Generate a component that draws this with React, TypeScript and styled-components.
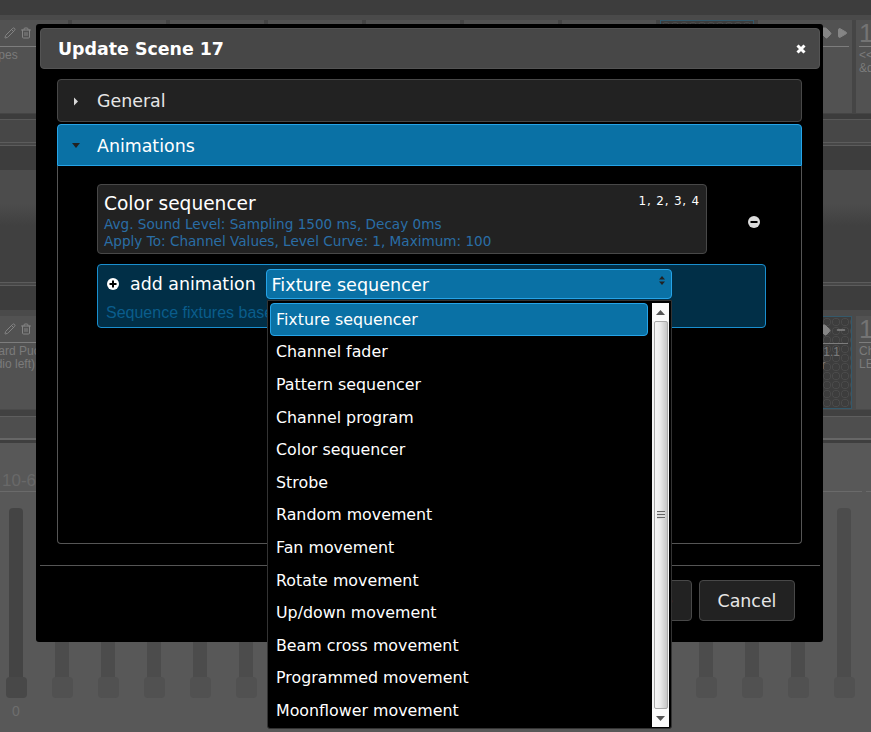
import React from "react";
import styled, { createGlobalStyle } from "styled-components";
import { Pencil, Trash2, Tag, Play, Minus } from "lucide-react";

const GlobalStyle = createGlobalStyle`
  html, body {
    margin: 0;
    padding: 0;
    height: 732px;
    overflow: hidden;
    background: #585858;
    font-family: "DejaVu Sans", sans-serif;
  }
  * { box-sizing: border-box; }
`;

const Page = styled.div`
  position: relative;
  width: 871px;
  height: 732px;
  overflow: hidden;
`;

/* ---------- dimmed page behind the dialog ---------- */

const Band = styled.div<{ $h: number; $bg: string; $line?: string }>`
  height: ${(p) => p.$h}px;
  background: ${(p) => p.$bg};
  border-top: ${(p) => (p.$line ? `1px solid ${p.$line}` : "none")};
`;

const SceneRow = styled.div<{ $bg: string }>`
  display: flex;
  gap: 4px;
  height: 94px;
  margin-left: -26px;
  width: 1000px;
  background: ${(p) => p.$bg};
`;

const SceneCard = styled.div<{ $active?: boolean }>`
  flex: 0 0 94px;
  height: 93px;
  padding: 0 3px;
  font-family: "Liberation Sans", sans-serif;
  font-size: 12px;
  line-height: 13px;
  color: #7b7b7b;
  white-space: nowrap;
  overflow: hidden;
  background-color: ${(p) => (p.$active ? "#3d3d3d" : "#525252")};
  background-image: ${(p) =>
    p.$active ? "radial-gradient(circle at 5px 5px, transparent 3px, #4b4b4b 3.5px, transparent 4.5px)" : "none"};
  background-size: 9px 9px;
  border: ${(p) => (p.$active ? "1px solid #34596b" : "none")};
`;

const CardTop = styled.div`
  display: flex;
  align-items: center;
  height: 27px;
  border-bottom: 1px solid #7d7d7d;
  margin-bottom: 2px;
`;

const CardNumber = styled.span`
  width: 30px;
  font-size: 26px;
  color: #747474;
`;

const CardTools = styled.div`
  display: flex;
  gap: 4px;
  margin-left: auto;
  margin-right: 1px;
  color: #858585;
  svg { display: block; flex: none; }
`;

const CardLine = styled.div`
  height: 13px;
`;

const BankHead = styled.div`
  display: flex;
  gap: 4px;
  height: 49px;
`;

const BankGroup = styled.div<{ $w?: number }>`
  flex: ${(p) => (p.$w ? `0 0 ${p.$w}px` : "1")};
  padding: 28px 0 0 2px;
  height: 49px;
  border-bottom: 1px solid #6a6a6a;
  font-family: "Liberation Sans", sans-serif;
  font-size: 17px;
  line-height: 20px;
  color: #696969;
`;

const FaderRow = styled.div`
  display: flex;
  margin: 16px 0 0 -7px;
`;

const Fader = styled.div`
  flex: 0 0 46px;
  display: flex;
  flex-direction: column;
  align-items: center;
  font-family: "Liberation Sans", sans-serif;
  font-size: 14px;
  line-height: 16px;
  color: #6e6e6e;
`;

const FaderTrack = styled.div<{ $dark?: boolean }>`
  width: 14px;
  height: 169px;
  border-radius: 4px 4px 0 0;
  background: ${(p) => (p.$dark ? "#444444" : "#4c4c4c")};
`;

const FaderKnob = styled.div<{ $dark?: boolean }>`
  width: 21px;
  height: 21px;
  margin-bottom: 5px;
  border-radius: 4px;
  background: ${(p) => (p.$dark ? "#484848" : "#515151")};
`;

/* ---------- dialog ---------- */

const Dialog = styled.div`
  position: absolute;
  left: 36px;
  top: 24px;
  width: 787px;
  height: 618px;
  padding: 4px 3px 0 4px;
  background: #000;
  border-radius: 3px;
`;

const DialogHeader = styled.div`
  display: flex;
  align-items: center;
  justify-content: space-between;
  height: 41px;
  padding: 0 13px 0 17px;
  background: #474747;
  border: 1px solid #545454;
  border-radius: 4px;
`;

const DialogTitle = styled.h1`
  margin: 0;
  font-size: 17.4px;
  line-height: 22px;
  font-weight: 700;
  color: #fff;
`;

const DialogBody = styled.div`
  display: flex;
  flex-direction: column;
  gap: 2px;
  padding: 10px 18px 0 17px;
  height: 497px;
  border-bottom: 1px solid #555;
`;

const AccordionHead = styled.div<{ $open?: boolean }>`
  display: flex;
  align-items: center;
  gap: 17px;
  height: ${(p) => (p.$open ? 42 : 43)}px;
  padding: 1px 0 0 14px;
  font-size: 17.4px;
  color: ${(p) => (p.$open ? "#fff" : "#e6e6e6")};
  background: ${(p) => (p.$open ? "#0a71a5" : "#222222")};
  border: 1px solid ${(p) => (p.$open ? "#26a4e8" : "#484848")};
  border-radius: ${(p) => (p.$open ? "4px 4px 0 0" : "4px")};
  svg { flex: none; }
`;

const AccordionPanel = styled.div`
  height: 378px;
  margin-top: -2px;
  padding: 18px 35px 0 39px;
  border: 1px solid #555;
  border-top: none;
  border-radius: 0 0 4px 4px;
`;

const AnimationLine = styled.div`
  display: flex;
  align-items: center;
`;

const AnimationCard = styled.div`
  position: relative;
  width: 610px;
  height: 70px;
  padding: 6px 6px 0;
  background: #222222;
  border: 1px solid #484848;
  border-radius: 4px;
`;

const AnimationName = styled.div`
  font-size: 18.6px;
  line-height: 25px;
  color: #fff;
`;

const AnimationDetail = styled.div`
  font-size: 13.6px;
  line-height: 17px;
  color: #2a6ea6;
  white-space: nowrap;
`;

const AnimationChannels = styled.span`
  position: absolute;
  top: 8px;
  right: 6px;
  font-size: 12px;
  line-height: 16px;
  letter-spacing: 0.8px;
  color: #fff;
`;

const RemoveButton = styled.span`
  margin: 6px 0 0 41px;
  color: #dcdcdc;
  svg { display: block; }
`;

const AddPanel = styled.div`
  width: 669px;
  height: 64px;
  margin-top: 10px;
  padding: 4px 0 0 8px;
  background: #012f47;
  border: 1px solid #1a8fcf;
  border-radius: 4px;
`;

const AddLine = styled.div`
  display: flex;
  align-items: center;
  height: 30px;
`;

const AddIcon = styled.span`
  display: flex;
  margin-left: 1px;
  color: #fff;
`;

const AddLabel = styled.span`
  margin-left: 11px;
  width: 136px;
  font-size: 17.4px;
  color: #fff;
  white-space: nowrap;
`;

const SelectBox = styled.div`
  position: relative;
  width: 406px;
  height: 30px;
  padding: 1px 0 0 4.5px;
  font-size: 17.6px;
  line-height: 28px;
  color: #fff;
  background: #0a71a5;
  border: 1px solid #26a4e8;
  border-radius: 4px;
`;

const SortArrows = styled.svg`
  position: absolute;
  right: 6px;
  top: 6px;
`;

const AddHint = styled.div`
  margin-top: 5px;
  font-family: "Liberation Sans", sans-serif;
  font-size: 16px;
  line-height: 18px;
  color: #0a5d8c;
  white-space: nowrap;
`;

/* native select style list, lies over the dialog */
const OptionList = styled.div`
  position: absolute;
  left: 0;
  top: 30px;
  z-index: 2;
  display: flex;
  width: 405px;
  height: 429px;
  padding: 2px;
  background: #000;
  border: 1px solid #333;
  border-radius: 0 0 3px 3px;
`;

const Options = styled.div`
  flex: 1;
  padding-right: 4px;
`;

const OptionItem = styled.div<{ $selected?: boolean }>`
  display: flex;
  align-items: center;
  height: 32.6px;
  padding-left: 5px;
  font-size: 15.85px;
  line-height: 29px;
  color: #fff;
  background: ${(p) => (p.$selected ? "#0a71a5" : "transparent")};
  border: 1px solid ${(p) => (p.$selected ? "#26a4e8" : "transparent")};
  border-radius: 4px;
`;

const ScrollBar = styled.div`
  display: flex;
  flex-direction: column;
  flex: 0 0 17px;
  height: 424px;
  background: #f4f4f4;
`;

const ScrollButton = styled.div`
  display: flex;
  align-items: center;
  justify-content: center;
  flex: 0 0 18px;
  background: #fbfbfb;
`;

const ScrollThumb = styled.div`
  flex: 1;
  display: flex;
  align-items: center;
  justify-content: center;
  margin: 0 1px 0 2px;
  border: 1px solid #a8a8a8;
  border-radius: 2px;
  background: linear-gradient(90deg, #f6f6f6 0%, #ececec 40%, #c6c6c6 100%);
`;

const ThumbGrip = styled.div`
  width: 8px;
  height: 8px;
  background: repeating-linear-gradient(180deg, #666 0 1px, #ddd 1px 3px);
`;

const DialogFooter = styled.div`
  display: flex;
  justify-content: flex-end;
  gap: 7px;
  padding: 14px 25px 0 0;
`;

const FooterButton = styled.button<{ $w: number }>`
  height: 41px;
  width: ${(p) => p.$w}px;
  padding: 0;
  font-family: inherit;
  font-size: 17.4px;
  color: #e6e6e6;
  background: #222222;
  border: 1px solid #484848;
  border-radius: 4px;
`;

const TriRight = () => (
  <svg width="8" height="9" viewBox="0 0 8 9">
    <polygon points="2,0.5 6,4.5 2,8.5" fill="#d8d8d8" />
  </svg>
);

const TriDown = () => (
  <svg width="8" height="5" viewBox="0 0 8 5">
    <polygon points="0,0 8,0 4,5" fill="#222" />
  </svg>
);

const CloseIcon = () => (
  <svg width="10" height="10" viewBox="0 0 10 10">
    <path d="M1.5 1.5 L8.5 8.5 M8.5 1.5 L1.5 8.5" stroke="#fff" strokeWidth="3" />
  </svg>
);

const CircleIcon = ({ plus }: { plus?: boolean }) => (
  <svg width="12" height="12" viewBox="0 0 12 12">
    <circle cx="6" cy="6" r="6" fill="currentColor" />
    <rect x="2.5" y="5" width="7" height="2" fill="#000" />
    {plus && <rect x="5" y="2.5" width="2" height="7" fill="#000" />}
  </svg>
);

const ScrollArrow = ({ down }: { down?: boolean }) => (
  <svg width="9" height="5" viewBox="0 0 9 5">
    <polygon points={down ? "0,0 9,0 4.5,5" : "0,5 9,5 4.5,0"} fill="#555" />
  </svg>
);

const animationTypes = [
  "Fixture sequencer",
  "Channel fader",
  "Pattern sequencer",
  "Channel program",
  "Color sequencer",
  "Strobe",
  "Random movement",
  "Fan movement",
  "Rotate movement",
  "Up/down movement",
  "Beam cross movement",
  "Programmed movement",
  "Moonflower movement",
];

interface Scene {
  lines: string[];
  active?: boolean;
  last?: boolean;
}

const topScenes: Scene[] = [
  { lines: ["Shapes"] },
  { lines: [] },
  { lines: [] },
  { lines: [] },
  { lines: [] },
  { lines: [] },
  { lines: [] },
  { lines: [], active: true },
  { lines: [] },
  { lines: ["<<", "&q"] },
];

const lowerScenes: Scene[] = [
  { lines: ["Hazard Puck", "(Audio left)"] },
  { lines: [] },
  { lines: [] },
  { lines: [] },
  { lines: [] },
  { lines: [] },
  { lines: [] },
  { lines: [] },
  { lines: ["Fixture Set 1.1", "Warm Color"], active: true, last: true },
  { lines: ["Ch", "LE"] },
];

const SceneTile = ({ scene }: { scene: Scene }) => (
  <SceneCard $active={scene.active}>
    <CardTop>
      <CardNumber>1</CardNumber>
      <CardTools>
        <Pencil size={12} />
        <Trash2 size={12} />
        <Tag size={12} fill="currentColor" />
        {scene.last ? <Minus size={12} strokeWidth={3} /> : <Play size={12} fill="currentColor" />}
      </CardTools>
    </CardTop>
    {scene.lines.map((line, i) => (
      <CardLine key={i}>{line}</CardLine>
    ))}
  </SceneCard>
);

export default function App() {
  return (
    <Page>
      <GlobalStyle />

      <Band $h={15} $bg="#3d3d3d" />
      <Band $h={5} $bg="#4a4a4a" />
      <SceneRow $bg="#454545">
        {topScenes.map((s, i) => <SceneTile key={i} scene={s} />)}
      </SceneRow>
      <Band $h={5} $bg="#3c3c3c" />
      <Band $h={23} $bg="#474747" $line="#585858" />
      <Band $h={3} $bg="#474747" $line="#5c5c5c" />
      <Band $h={25} $bg="#3d3d3d" $line="#5c5c5c" />
      <Band $h={112} $bg="linear-gradient(180deg, #4c4c4c 0%, #4c4c4c 30%, #404040 50%, #404040 100%)" />
      <Band $h={3} $bg="#474747" $line="#5c5c5c" />
      <Band $h={25} $bg="#3d3d3d" $line="#5c5c5c" />
      <Band $h={6} $bg="#4a4a4a" />
      <SceneRow $bg="#4a4a4a">
        {lowerScenes.map((s, i) => <SceneTile key={i} scene={s} />)}
      </SceneRow>
      <Band $h={6} $bg="#414141" />
      <Band $h={22} $bg="#4e4e4e" $line="#5e5e5e" />
      <Band $h={2} $bg="#666666" />
      <Band $h={3} $bg="#3f3f3f" />

      <BankHead>
        <BankGroup $w={862}>10-6</BankGroup>
        <BankGroup />
      </BankHead>
      <FaderRow>
        {Array.from({ length: 19 }).map((_, i) => (
          <Fader key={i}>
            <FaderTrack $dark={i === 0} />
            <FaderKnob $dark={i === 0} />
            {i === 0 && "0"}
          </Fader>
        ))}
      </FaderRow>

      <Dialog>
        <DialogHeader>
          <DialogTitle>Update Scene 17</DialogTitle>
          <CloseIcon />
        </DialogHeader>
        <DialogBody>
          <AccordionHead>
            <TriRight />
            General
          </AccordionHead>
          <AccordionHead $open>
            <TriDown />
            Animations
          </AccordionHead>
          <AccordionPanel>
            <AnimationLine>
              <AnimationCard>
                <AnimationName>Color sequencer</AnimationName>
                <AnimationDetail>Avg. Sound Level: Sampling 1500 ms, Decay 0ms</AnimationDetail>
                <AnimationDetail>Apply To: Channel Values, Level Curve: 1, Maximum: 100</AnimationDetail>
                <AnimationChannels>1, 2, 3, 4</AnimationChannels>
              </AnimationCard>
              <RemoveButton><CircleIcon /></RemoveButton>
            </AnimationLine>
            <AddPanel>
              <AddLine>
                <AddIcon><CircleIcon plus /></AddIcon>
                <AddLabel>add animation</AddLabel>
                <SelectBox>
                  Fixture sequencer
                  <SortArrows width="6" height="9" viewBox="0 0 6 9">
                    <polygon points="0,3.5 6,3.5 3,0" fill="#222" />
                    <polygon points="0,5.5 6,5.5 3,9" fill="#222" />
                  </SortArrows>
                  <OptionList>
                    <Options>
                      {animationTypes.map((name, i) => (
                        <OptionItem key={name} $selected={i === 0}>{name}</OptionItem>
                      ))}
                    </Options>
                    <ScrollBar>
                      <ScrollButton><ScrollArrow /></ScrollButton>
                      <ScrollThumb><ThumbGrip /></ScrollThumb>
                      <ScrollButton><ScrollArrow down /></ScrollButton>
                    </ScrollBar>
                  </OptionList>
                </SelectBox>
              </AddLine>
              <AddHint>Sequence fixtures based on a step pattern</AddHint>
            </AddPanel>
          </AccordionPanel>
        </DialogBody>
        <DialogFooter>
          <FooterButton $w={82}>Save</FooterButton>
          <FooterButton $w={96}>Cancel</FooterButton>
        </DialogFooter>
      </Dialog>
    </Page>
  );
}
